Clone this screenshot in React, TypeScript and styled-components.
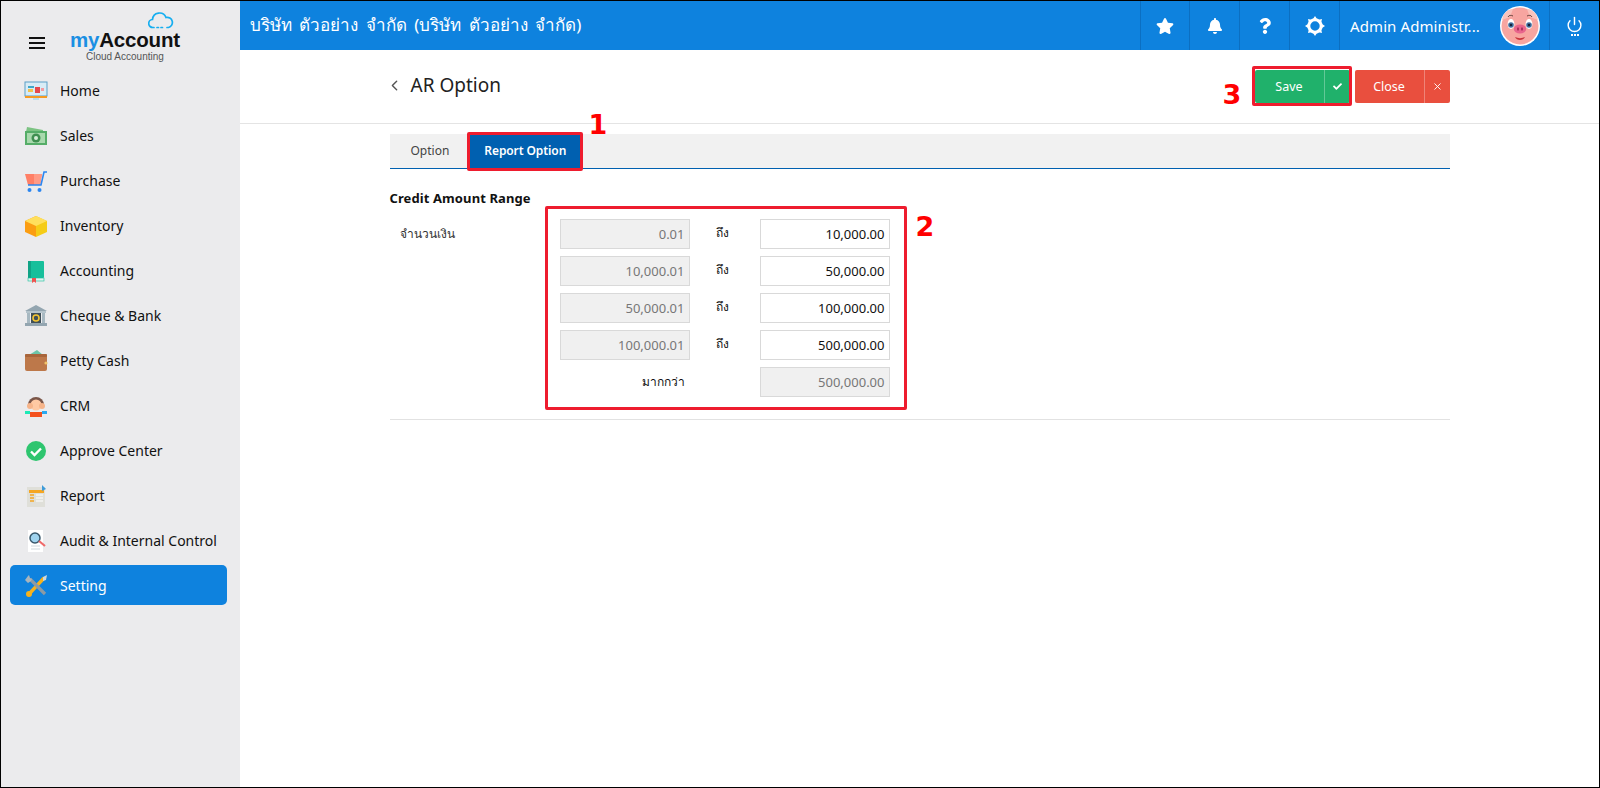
import styled, { createGlobalStyle } from "styled-components";
import { FaStar, FaBell, FaQuestion, FaCheck } from "react-icons/fa";
import { FiChevronLeft, FiX } from "react-icons/fi";
import { LuPower } from "react-icons/lu";
import { Fragment } from "react";
import type { ReactNode } from "react";

const GlobalStyle = createGlobalStyle`
  html, body {
    margin: 0;
    padding: 0;
    background: #fff;
  }
  body {
    font-family: "Noto Sans", "Open Sans", "DejaVu Sans", sans-serif;
    color: #111;
  }
  * {
    box-sizing: border-box;
  }
`;

const Frame = styled.div`
  width: 1600px;
  height: 788px;
  border: 1px solid #000;
  display: flex;
  overflow: hidden;
  background: #fff;
`;

/* sidebar */
const Sidebar = styled.aside`
  width: 239px;
  flex: none;
  background: #ebebed;
  padding-top: 2px;
`;
const Brand = styled.div`
  height: 65px;
  display: flex;
  align-items: flex-start;
  padding-left: 28px;
`;
const Burger = styled.div`
  width: 16px;
  height: 12px;
  margin-top: 34px;
  border-top: 2px solid #111;
  border-bottom: 2px solid #111;
  position: relative;
  &::after {
    content: "";
    position: absolute;
    left: 0;
    right: 0;
    top: 3px;
    height: 2px;
    background: #111;
  }
`;
const Logo = styled.div`
  position: relative;
  margin-left: 25px;
  padding-top: 25px;
  width: 112px;
  font-family: "Liberation Sans", Arial, sans-serif;
`;
const LogoCloud = styled.svg`
  position: absolute;
  left: 78px;
  top: 8px;
`;
const LogoName = styled.div`
  font-size: 20.5px;
  line-height: 23px;
  font-weight: 700;
  letter-spacing: -0.2px;
  color: #111;
  span {
    color: #1a8fe3;
  }
`;
const LogoSub = styled.div`
  font-size: 10px;
  line-height: 11px;
  color: #555;
  margin-left: 16px;
  margin-top: 0;
`;
const Menu = styled.nav`
  display: flex;
  flex-direction: column;
`;
const MenuItem = styled.div<{ $active?: boolean }>`
  height: 45px;
  display: flex;
  align-items: center;
  position: relative;
  z-index: 0;
  padding-left: 23px;
  gap: 12px;
  font-size: 14px;
  color: ${({ $active }) => ($active ? "#fff" : "#111")};
  ${({ $active }) =>
    $active &&
    `&::before {
      content: "";
      position: absolute;
      z-index: -1;
      left: 9px;
      width: 217px;
      top: 2px;
      height: 40px;
      border-radius: 5px;
      background: #0e82de;
    }`}
`;
const MenuIcon = styled.svg`
  width: 24px;
  height: 24px;
  flex: none;
`;

/* main */
const Main = styled.main`
  flex: 1;
  min-width: 0;
  display: flex;
  flex-direction: column;
`;
const TopBar = styled.header`
  height: 49px;
  flex: none;
  background: #0e82de;
  display: flex;
  align-items: stretch;
  color: #fff;
`;
const Company = styled.div`
  flex: 1;
  padding-left: 10px;
  font-size: 17px;
  line-height: 48px;
  word-spacing: 3px;
`;
const BarCell = styled.div<{ $w: number }>`
  width: ${({ $w }) => $w}px;
  flex: none;
  border-left: 1px solid #0b6fc2;
  display: flex;
  align-items: center;
  justify-content: center;
`;
const UserCell = styled.div`
  width: 210px;
  flex: none;
  border-left: 1px solid #0b6fc2;
  display: flex;
  align-items: center;
  padding-left: 10px;
  font-size: 15px;
  letter-spacing: 0.1px;
`;
const Avatar = styled.svg`
  margin-left: auto;
  margin-right: 9px;
`;
const PowerWrap = styled.div`
  display: flex;
  flex-direction: column;
  align-items: center;
  &::after {
    content: "";
    width: 8px;
    height: 2px;
    margin-top: 1px;
    background: repeating-linear-gradient(90deg, #fff 0 2px, transparent 2px 3px);
  }
`;

const PageHead = styled.div`
  height: 74px;
  flex: none;
  border-bottom: 1px solid #e4e4e4;
  display: flex;
  justify-content: center;
`;
const Inner = styled.div`
  width: 1060px;
`;
const HeadRow = styled(Inner)`
  display: flex;
  align-items: flex-start;
  position: relative;
`;
const Title = styled.h1`
  margin: 0;
  padding-top: 20px;
  display: flex;
  align-items: center;
  gap: 8px;
  font-size: 19px;
  line-height: 30px;
  font-weight: 400;
  color: #222;
  svg {
    color: #555;
    margin-left: -4px;
  }
`;
const Actions = styled.div`
  margin-left: auto;
  padding-top: 20px;
  display: flex;
  gap: 5px;
`;
const Marked = styled.div`
  position: relative;
  padding: 0;
  &::after {
    content: "";
    position: absolute;
    inset: -4px -2px -3px -3px;
    border: 3px solid #ee1c2e;
    border-radius: 2px;
    pointer-events: none;
  }
`;
const SplitButton = styled.div<{ $bg: string }>`
  width: 95px;
  height: 33px;
  display: flex;
  border-radius: 2px;
  background: ${({ $bg }) => $bg};
  color: #fff;
  font-size: 12.5px;
  span {
    flex: 1;
    display: flex;
    align-items: center;
    justify-content: center;
  }
  i {
    width: 26px;
    flex: none;
    display: flex;
    align-items: center;
    justify-content: center;
    border-left: 1px solid rgba(255, 255, 255, 0.3);
  }
`;
const Digit = styled.div`
  position: absolute;
  font-family: "DejaVu Sans", sans-serif;
  font-size: 27px;
  line-height: 28px;
  font-weight: 700;
  color: #ff0000;
`;
const SaveDigit = styled(Digit)`
  left: 833px;
  top: 31px;
`;
const TabDigit = styled(Digit)`
  left: 199px;
  top: -23px;
`;
const FieldsDigit = styled(Digit)`
  left: 526px;
  top: 7px;
`;

const Body = styled(Inner)`
  align-self: center;
  padding-top: 10px;
`;
const Tabs = styled.div`
  height: 35px;
  background: #f1f1f1;
  border-bottom: 1px solid #0060b0;
  display: flex;
  position: relative;
`;
const Tab = styled.div<{ $active?: boolean }>`
  position: relative;
  height: 34px;
  padding: 0 ${({ $active }) => ($active ? "14px" : "21px")} 2px;
  display: flex;
  align-items: center;
  font-size: 12px;
  letter-spacing: ${({ $active }) => ($active ? "-0.1px" : "0")};
  font-weight: ${({ $active }) => ($active ? 600 : 400)};
  color: ${({ $active }) => ($active ? "#fff" : "#444")};
  background: ${({ $active }) => ($active ? "#0060b0" : "transparent")};
  ${({ $active }) =>
    $active &&
    `&::after {
      content: "";
      position: absolute;
      inset: -2px -3px -3px -3px;
      border: 3px solid #ee1c2e;
      border-radius: 2px;
    }`}
`;
const SectionTitle = styled.div`
  margin-top: 20px;
  font-size: 13px;
  line-height: 18px;
  font-weight: 700;
  letter-spacing: 0.1px;
  color: #111;
`;
const FormRow = styled.div`
  position: relative;
  display: flex;
  align-items: flex-start;
  margin-top: -1px;
  padding-bottom: 9px;
  border-bottom: 1px solid #e2e2e2;
`;
const FieldLabel = styled.div`
  width: 155px;
  padding: 18px 0 0 10px;
  font-size: 12px;
  line-height: 20px;
  color: #333;
`;
const RangeBox = styled.div`
  display: grid;
  grid-template-columns: 130px 70px 130px;
  row-gap: 7px;
  border: 3px solid #ee1c2e;
  border-radius: 2px;
  padding: 10px 14px 10px 12px;
`;
const Field = styled.div<{ $off?: boolean }>`
  height: 30px;
  border: 1px solid #d9d9d9;
  background: ${({ $off }) => ($off ? "#f0f0f0" : "#fff")};
  color: ${({ $off }) => ($off ? "#777" : "#111")};
  font-size: 13px;
  line-height: 28px;
  text-align: right;
  padding-right: 4px;
`;
const ToText = styled.div`
  text-align: center;
  font-size: 12px;
  line-height: 28px;
  padding-right: 4px;
`;
const MoreText = styled.div`
  grid-column: 1 / span 2;
  font-size: 12px;
  line-height: 30px;
  text-align: right;
  padding-right: 75px;
  color: #111;
`;

const icons: Record<string, ReactNode> = {
  home: (
    <>
      <rect x="1" y="3" width="22" height="14" fill="#d8ecf6" stroke="#5b9fc8" />
      <rect x="4" y="7" width="6" height="2" fill="#3fa7c9" />
      <rect x="4" y="10" width="5" height="3" fill="#f2c14e" />
      <rect x="11" y="8" width="5" height="6" fill="#e5484d" />
      <rect x="17" y="9" width="3" height="3" fill="#f59aa0" />
      <rect x="1" y="17" width="22" height="2" fill="#f59a23" />
      <rect x="9" y="19" width="6" height="2" fill="#bcdcec" />
    </>
  ),
  sales: (
    <>
      <path d="M2 8 3 3l16 3v2z" fill="#7cc383" />
      <rect x="1" y="7" width="22" height="14" fill="#55ad68" />
      <rect x="3" y="9" width="18" height="10" fill="#a9d9ae" />
      <circle cx="12" cy="14" r="4.5" fill="#3f8f50" />
      <circle cx="12" cy="14" r="2" fill="#d5eed7" />
    </>
  ),
  purchase: (
    <>
      <path d="M1 5h17l-2 11H4z" fill="#ff7f66" />
      <path d="M10 5h8l-2 11h-6z" fill="#ff9a85" />
      <path d="M4 16h13l3-13h3" fill="none" stroke="#2b86f0" strokeWidth="1.6" />
      <circle cx="5.5" cy="21" r="2" fill="#2b86f0" />
      <circle cx="15.5" cy="21" r="2" fill="#2b86f0" />
    </>
  ),
  inventory: (
    <>
      <path d="M12 2 23 7v11l-11 5z" fill="#f5cc17" />
      <path d="M12 2 1 7v11l11 5z" fill="#fb9d12" />
      <path d="M1 7l11-5 11 5-11 5z" fill="#ffdf5c" />
    </>
  ),
  accounting: (
    <>
      <rect x="4" y="2" width="16" height="17" rx="1" fill="#17bf9b" />
      <rect x="4" y="2" width="3" height="17" fill="#11a386" />
      <rect x="4" y="19" width="16" height="3" fill="#dff3ee" stroke="#17bf9b" strokeWidth="0.6" />
      <path d="M8 19h4v5l-2-1.5L8 24z" fill="#ef5350" />
    </>
  ),
  bank: (
    <>
      <path d="M12 1 23 7H1z" fill="#93a5b0" />
      <rect x="2" y="7" width="20" height="2" fill="#b5c4cc" />
      <rect x="3" y="9" width="3" height="10" fill="#a7b8c1" />
      <rect x="18" y="9" width="3" height="10" fill="#a7b8c1" />
      <rect x="7" y="9" width="10" height="10" fill="#3f4f58" />
      <circle cx="12" cy="14" r="3" fill="none" stroke="#f4c430" strokeWidth="1.6" />
      <rect x="1" y="19" width="22" height="3" fill="#93a5b0" />
    </>
  ),
  petty: (
    <>
      <path d="M5 6 13 1l6 5z" fill="#6cc5a8" />
      <rect x="1" y="5" width="22" height="17" rx="2" fill="#bd784a" />
      <rect x="1" y="5" width="22" height="3" rx="1" fill="#a8653b" />
      <circle cx="22" cy="14" r="1.6" fill="#f0c36a" />
    </>
  ),
  crm: (
    <>
      <path d="M4 11a8 8 0 0 1 16 0v3H4z" fill="#7a5548" />
      <circle cx="12" cy="11" r="5.5" fill="#ffc9a3" />
      <circle cx="6" cy="12" r="3" fill="#f6b48a" />
      <circle cx="18" cy="12" r="3" fill="#f6b48a" />
      <rect x="6" y="18" width="12" height="5" fill="#f4511e" />
      <rect x="1" y="17" width="5" height="3" fill="#1de9b6" />
      <rect x="18" y="17" width="5" height="3" fill="#29a9f0" />
    </>
  ),
  approve: (
    <>
      <circle cx="12" cy="12" r="10" fill="#2ec56f" />
      <path d="M7 12.5l3.5 3.5L17 9.5" fill="none" stroke="#fff" strokeWidth="2.4" />
    </>
  ),
  report: (
    <>
      <rect x="3" y="3" width="18" height="20" fill="#dfdfd9" />
      <rect x="5" y="6" width="15" height="3" fill="#f5a623" />
      <path d="M18 1l4 4-4 2z" fill="#3d9bd9" />
      <path d="M6 11h4M6 14h4M6 17h4" stroke="#f5a623" strokeWidth="1.5" />
      <path d="M12 11h7M12 14h7M12 17h7" stroke="#fff" />
    </>
  ),
  audit: (
    <>
      <rect x="4" y="1" width="15" height="22" fill="#fff" />
      <path d="M7 17h9M7 20h9" stroke="#cfd8dc" />
      <circle cx="11" cy="9" r="5" fill="#9fd3ee" stroke="#37576b" strokeWidth="1.5" />
      <path d="M15 12l6 5" stroke="#ef6a6a" strokeWidth="2.2" />
    </>
  ),
  setting: (
    <>
      <path d="M20 4 6 19" stroke="#f7b21b" strokeWidth="3.4" />
      <path d="M6 5l15 15" stroke="#8d9aa3" strokeWidth="3.2" />
      <path d="M1 6 4 2l1-1 1 3 2 1-1 2-3 2z" fill="#aab5bc" />
      <path d="M19 3l4-2-1 5-3 1z" fill="#cfd8dc" />
      <circle cx="5" cy="20" r="3" fill="#f7b21b" />
    </>
  ),
};

const menu = [
  { id: "home", label: "Home" },
  { id: "sales", label: "Sales" },
  { id: "purchase", label: "Purchase" },
  { id: "inventory", label: "Inventory" },
  { id: "accounting", label: "Accounting" },
  { id: "bank", label: "Cheque & Bank" },
  { id: "petty", label: "Petty Cash" },
  { id: "crm", label: "CRM" },
  { id: "approve", label: "Approve Center" },
  { id: "report", label: "Report" },
  { id: "audit", label: "Audit & Internal Control" },
  { id: "setting", label: "Setting" },
];

const ranges = [
  ["0.01", "10,000.00"],
  ["10,000.01", "50,000.00"],
  ["50,000.01", "100,000.00"],
  ["100,000.01", "500,000.00"],
];

const GearIcon = () => (
  <svg width="20" height="20" viewBox="0 0 20 20">
    <circle cx="10" cy="10" r="6.2" fill="none" stroke="#fff" strokeWidth="3" />
    <path d="M10 0l2 3H8zM10 20l-2-3h4zM0 10l3-2v4zM20 10l-3 2V8zM3 3l3.4.8L3.8 6.4zM17 3l-.8 3.4-2.6-2.6zM3 17l.8-3.4 2.6 2.6zM17 17l-3.4-.8 2.6-2.6z" fill="#fff" />
  </svg>
);

const Pig = () => (
  <Avatar width="40" height="40" viewBox="0 0 40 40">
    <circle cx="20" cy="20" r="20" fill="#fff" />
    <circle cx="20" cy="20" r="18.5" fill="#f7a5a0" />
    <path d="M2 14C3 7 8 3 13 3l-3 8zM38 14c-1-7-6-11-11-11l3 8z" fill="#f9c3bd" />
    <path d="M8 11c1-2 3-2 5-1M32 11c-1-2-3-2-5-1" fill="none" stroke="#5b3a32" strokeWidth="0.9" />
    <ellipse cx="11" cy="18" rx="3.4" ry="5" fill="#fff" />
    <ellipse cx="29" cy="18" rx="3.4" ry="5" fill="#fff" />
    <circle cx="11" cy="19" r="2.8" fill="#3f6f9f" />
    <circle cx="29" cy="19" r="2.8" fill="#3f6f9f" />
    <circle cx="11" cy="19" r="1.3" fill="#12233a" />
    <circle cx="29" cy="19" r="1.3" fill="#12233a" />
    <ellipse cx="20" cy="23" rx="6.2" ry="4.6" fill="#e8658c" />
    <ellipse cx="18" cy="23" rx="1" ry="1.7" fill="#a52f58" />
    <ellipse cx="22" cy="23" rx="1" ry="1.7" fill="#a52f58" />
    <path d="M15 31c3 1.5 7 1.5 10 0-1.5 4-8.500 4-10 0z" fill="#c9353d" />
  </Avatar>
);

export default function App() {
  return (
    <>
      <GlobalStyle />
      <Frame>
        <Sidebar>
          <Brand>
            <Burger />
            <Logo>
              <LogoCloud width="26" height="18" viewBox="0 0 26 18">
                <path
                  d="M6 16.500H5a4 4 0 0 1-.5-8A7 7 0 0 1 18 6.500a5 5 0 0 1 2.500 10H19M9 16.500h1.500M13 16.500h1.500"
                  fill="none"
                  stroke="#16aef0"
                  strokeWidth="1.7"
                  strokeLinecap="round"
                />
              </LogoCloud>
              <LogoName>
                <span>my</span>Account
              </LogoName>
              <LogoSub>Cloud Accounting</LogoSub>
            </Logo>
          </Brand>
          <Menu>
            {menu.map((m) => (
              <MenuItem key={m.id} $active={m.id === "setting"}>
                <MenuIcon viewBox="0 0 24 24">{icons[m.id]}</MenuIcon>
                {m.label}
              </MenuItem>
            ))}
          </Menu>
        </Sidebar>
        <Main>
          <TopBar>
            <Company>บริษัท ตัวอย่าง จำกัด (บริษัท ตัวอย่าง จำกัด)</Company>
            <BarCell $w={49}>
              <FaStar size={18} />
            </BarCell>
            <BarCell $w={50}>
              <FaBell size={16} />
            </BarCell>
            <BarCell $w={50}>
              <FaQuestion size={16} />
            </BarCell>
            <BarCell $w={50}>
              <GearIcon />
            </BarCell>
            <UserCell>
              Admin Administr...
              <Pig />
            </UserCell>
            <BarCell $w={50}>
              <PowerWrap>
                <LuPower size={17} />
              </PowerWrap>
            </BarCell>
          </TopBar>
          <PageHead>
            <HeadRow>
              <Title>
                <FiChevronLeft size={17} />
                AR Option
              </Title>
              <SaveDigit>3</SaveDigit>
              <Actions>
                <Marked>
                  <SplitButton $bg="#20b16b">
                    <span>Save</span>
                    <i>
                      <FaCheck size={9} />
                    </i>
                  </SplitButton>
                </Marked>
                <SplitButton $bg="#e94f3e">
                  <span>Close</span>
                  <i>
                    <FiX size={11} />
                  </i>
                </SplitButton>
              </Actions>
            </HeadRow>
          </PageHead>
          <Body>
            <Tabs>
              <Tab>Option</Tab>
              <Tab $active>Report Option</Tab>
              <TabDigit>1</TabDigit>
            </Tabs>
            <SectionTitle>Credit Amount Range</SectionTitle>
            <FormRow>
              <FieldLabel>จำนวนเงิน</FieldLabel>
              <RangeBox>
                {ranges.map(([from, to]) => (
                  <Fragment key={from}>
                    <Field $off>{from}</Field>
                    <ToText>ถึง</ToText>
                    <Field>{to}</Field>
                  </Fragment>
                ))}
                <MoreText>มากกว่า</MoreText>
                <Field $off>500,000.00</Field>
              </RangeBox>
              <FieldsDigit>2</FieldsDigit>
            </FormRow>
          </Body>
        </Main>
      </Frame>
    </>
  );
}
